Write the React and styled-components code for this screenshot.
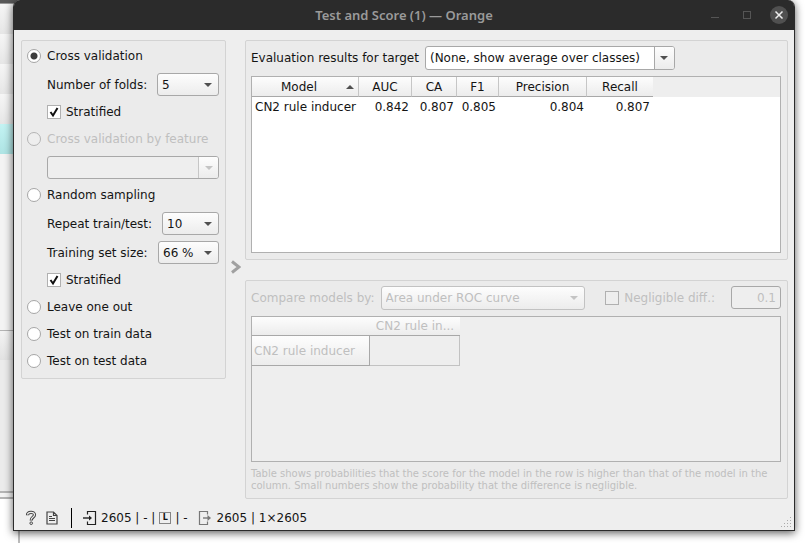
import React, { useState } from "react";
import styled, { createGlobalStyle, css } from "styled-components";

const GlobalStyle = createGlobalStyle`
  *, *::before, *::after { box-sizing: border-box; }
  html, body { margin: 0; padding: 0; }
  body {
    background: #fff;
    font: 12px/16px "DejaVu Sans", sans-serif;
    color: #141414;
    overflow: hidden;
  }
  input, select, button { font: inherit; color: inherit; margin: 0; }
`;

const raised = "linear-gradient(#fdfdfd, #ececec)";

const Desktop = styled.div`
  position: relative;
  display: flex;
  min-height: 100vh;
  padding: 0 16px 12px 13px;
`;

/* Window that lies behind the dialog */
const BackWindow = styled.div`
  position: absolute;
  inset: 0 auto 0 0;
  width: 20px;
  display: flex;
  flex-direction: column;
`;
const BackTitle = styled.div`
  height: 4px;
  background: #585858;
  border-bottom: 1px solid #999;
`;
const BackRow = styled.div`
  height: 30px;
  background: ${(p) => (p.$selected ? "linear-gradient(#c3f3f3, #aee4e4)" : "linear-gradient(#f6f6f6, #e6e6e6)")};
`;
const BackPane = styled.div`
  height: ${(p) => p.$height}px;
  background: ${(p) => p.$fill};
  border-bottom: ${(p) => p.$line || 0}px solid #b4b4b4;
`;
const BackEdge = styled.div`
  flex: 1;
  border-right: 2px solid #bcbcbc;
`;

const Dialog = styled.main`
  position: relative;
  flex: 1;
  min-width: 0;
  display: flex;
  flex-direction: column;
  background: #eee;
  border: 1px solid #2b2b2b;
  border-top: 0;
  border-radius: 7px 7px 0 0;
  box-shadow: 0 2px 9px rgba(0, 0, 0, 0.65);
`;

const TitleBar = styled.header`
  height: 30px;
  display: grid;
  grid-template-columns: 1fr auto 1fr;
  align-items: center;
  background: #2b2b2b;
  border-radius: 6px 6px 0 0;
`;
const Title = styled.h1`
  grid-column: 2;
  margin: 0;
  font: 600 13px/18px "Noto Sans", sans-serif;
  color: #9a9a9a;
`;
const WindowButtons = styled.div`
  justify-self: end;
  display: flex;
  gap: 14px;
  padding-right: 6px;
`;
const WindowButton = styled.button`
  width: 18px;
  height: 18px;
  padding: 0;
  border: 0;
  border-radius: 50%;
  background: ${(p) => (p.$filled ? "#505050" : "transparent")};
  svg { display: block; }
`;

const Body = styled.div`
  flex: 1;
  display: grid;
  grid-template-columns: auto 19px 1fr;
  padding: 10px 6px 0 7px;
`;

const Panel = styled.section`
  display: flex;
  flex-direction: column;
  gap: 6px;
  min-width: 0;
  padding: 5px 6px 6px 5px;
  border: 1px solid #d3d3d3;
  border-radius: 2px;
  background: #ebebeb;
  color: ${(p) => (p.$disabled ? "#bfbfbf" : "inherit")};
`;
const OptionsPanel = styled(Panel)`
  align-self: start;
  width: 205px;
`;
const Results = styled.div`
  display: grid;
  grid-template-rows: 1fr 1fr;
  gap: 20px;
  min-width: 0;
`;

const ChoiceRow = styled.label`
  display: flex;
  align-items: center;
  gap: ${(p) => (p.$check ? 5 : 6)}px;
  height: 21px;
  padding-bottom: 1px;
  margin-left: ${(p) => (p.$indent ? 20 : 0)}px;
  color: ${(p) => (p.$disabled ? "#bfbfbf" : "inherit")};
`;
const FieldRow = styled.div`
  display: flex;
  align-items: center;
  justify-content: space-between;
  height: 23px;
  margin-left: 20px;
`;
const Toolbar = styled.div`
  display: flex;
  align-items: center;
  height: 24px;
  gap: 6px;
`;

const Radio = styled.input.attrs({ type: "radio" })`
  appearance: none;
  width: 14px;
  height: 14px;
  border: 1px solid #a6a6a6;
  border-radius: 50%;
  background: #fff;
  &:checked { background: radial-gradient(circle, #3c3c3c 3px, #fff 4px); }
  &:disabled { background: #eee; border-color: #b4b4b4; }
`;

const CheckWrap = styled.span`
  display: grid;
  width: 14px;
  height: 14px;
  > * { grid-area: 1 / 1; }
  svg { pointer-events: none; visibility: hidden; }
  input:checked + svg { visibility: visible; }
`;
const CheckInput = styled.input.attrs({ type: "checkbox" })`
  appearance: none;
  width: 14px;
  height: 14px;
  border: 1px solid #b0b0b0;
  background: #fff;
  &:disabled { background: #eee; }
`;

const SelectWrap = styled.span`
  display: grid;
  width: ${(p) => p.$width}px;
  height: ${(p) => p.$height || 23}px;
  > * { grid-area: 1 / 1; }
`;
const SelectBox = styled.select`
  appearance: none;
  width: 100%;
  height: 100%;
  padding: 0 22px 0 4px;
  border: 1px solid ${(p) => (p.$faint ? "#c2c2c2" : "#a8a8a8")};
  border-radius: 3px;
  background: ${raised};
  opacity: 1;
  ${(p) => p.$editable && css`background: ${p.disabled ? "#eee" : "#fff"};`}
  &:disabled { color: #bfbfbf; }
`;
const SelectArrow = styled.span`
  justify-self: end;
  display: grid;
  place-items: center;
  width: 20px;
  margin: 1px;
  border-radius: 0 2px 2px 0;
  pointer-events: none;
  color: ${(p) => (p.$disabled ? "#c4c4c4" : "#505050")};
  ${(p) => p.$editable && css`
    border-left: 1px solid ${p.$disabled ? "#c6c6c6" : "#a8a8a8"};
    background: ${raised};
  `}
`;

const Expander = styled.button`
  place-self: center;
  width: 19px;
  height: 20px;
  margin-bottom: 5px;
  padding: 0;
  border: 0;
  background: none;
  svg { display: block; margin: auto; }
`;

const TableFrame = styled.div`
  flex: 1;
  min-height: 0;
  border: 1px solid #b0b0b0;
  background: ${(p) => (p.$disabled ? "#eee" : "linear-gradient(#eee 20px, #fff 20px)")};
  overflow: hidden;
`;
const Table = styled.table`
  table-layout: fixed;
  width: ${(p) => p.$width}px;
  border-collapse: separate;
  border-spacing: 0;
`;
const HeadCell = styled.th`
  height: ${(p) => (p.$compare ? 19 : 20)}px;
  padding: 0;
  font-weight: normal;
  text-align: center;
  background: ${raised};
  border-bottom: 1px solid #a8a8a8;
  border-right: ${(p) => (p.$divider ? "1px solid #c6c6c6" : "0")};
`;
const SortHead = styled.span`
  display: grid;
  grid-template-columns: 1fr 12px;
  align-items: center;
`;
const Cell = styled.td`
  height: 19px;
  padding: 0 3px;
  text-align: ${(p) => (p.$left ? "left" : "right")};
  white-space: nowrap;
`;
const RowHead = styled.th`
  height: 30px;
  padding: 2px 2px 0;
  font-weight: normal;
  text-align: left;
  white-space: nowrap;
  background: ${raised};
  border: solid #a8a8a8;
  border-width: 0 1px 1px 0;
`;
const EmptyCell = styled.td`
  border: solid #c2c2c2;
  border-width: 0 1px 1px 0;
`;

const DiffLabel = styled.label`
  display: flex;
  align-items: center;
  gap: 5px;
  margin: 0 10px 0 auto;
`;
const DiffInput = styled.input`
  width: 50px;
  height: 23px;
  padding: 0 4px;
  border: 1px solid #a8a8a8;
  border-radius: 3px;
  background: #eee;
  text-align: right;
`;
const Hint = styled.p`
  margin: 0;
  font-size: 10px;
  line-height: 12px;
`;

const StatusBar = styled.footer`
  display: flex;
  align-items: center;
  height: 31px;
  padding: 6px 0 0 6px;
`;
const StatusButton = styled.button`
  width: 21px;
  height: 18px;
  padding: 0;
  border: 0;
  background: none;
  svg { display: block; margin: auto; }
`;
const Divider = styled.span`
  width: 1px;
  height: 20px;
  margin: 0 10px 0 9px;
  background: #000;
`;
const StatusItem = styled.span`
  display: flex;
  align-items: center;
  gap: ${(p) => p.$gap || 4}px;
  margin-right: 10px;
  white-space: pre;
`;
const BatchMark = styled.span`
  display: grid;
  place-items: center;
  width: 12px;
  height: 12px;
  border: 1px solid #858585;
  font-size: 8px;
  line-height: 10px;
  font-weight: bold;
`;
const Grip = styled.svg`
  align-self: flex-end;
  margin: 0 2px 2px auto;
`;

function Select({ id, options, width, height, editable, disabled, faint, label }) {
  return (
    <SelectWrap $width={width} $height={height}>
      <SelectBox id={id} aria-label={label} $editable={editable} $faint={faint} disabled={disabled}>
        {options.map((o) => <option key={o}>{o}</option>)}
      </SelectBox>
      <SelectArrow $editable={editable} $disabled={disabled}>
        <svg width="8" height="4" viewBox="0 0 8 4"><path d="M0 0H8L4 4Z" fill="currentColor" /></svg>
      </SelectArrow>
    </SelectWrap>
  );
}

function Check(props) {
  return (
    <CheckWrap>
      <CheckInput {...props} />
      <svg width="14" height="14" viewBox="0 0 14 14">
        <path d="M3.5 7L6 10.5L10.5 3" fill="none" stroke="#111" strokeWidth="2" />
      </svg>
    </CheckWrap>
  );
}

const scores = [
  { name: "Model", width: 107, value: "CN2 rule inducer" },
  { name: "AUC", width: 53, value: "0.842" },
  { name: "CA", width: 45, value: "0.807" },
  { name: "F1", width: 42, value: "0.805" },
  { name: "Precision", width: 88, value: "0.804" },
  { name: "Recall", width: 66, value: "0.807" },
];

export default function App() {
  const [method, setMethod] = useState("cv");
  const radio = (value, text, disabled) => (
    <ChoiceRow $disabled={disabled}>
      <Radio name="method" checked={method === value} disabled={disabled} onChange={() => setMethod(value)} />
      {text}
    </ChoiceRow>
  );

  return (
    <>
      <GlobalStyle />
      <Desktop>
        <BackWindow aria-hidden="true">
          <BackTitle />
          <BackRow /><BackRow /><BackRow /><BackRow />
          <BackRow $selected />
          <BackPane $height={177} $fill="#f3f3f3" $line={1} />
          <BackPane $height={29} $fill="linear-gradient(#f3f3f3, #e2e2e2)" />
          <BackPane $height={133} $fill="#ebebeb" $line={2} />
          <BackPane $height={6} $fill="#f3f3f3" $line={2} />
          <BackEdge />
        </BackWindow>

        <Dialog>
          <TitleBar>
            <Title>Test and Score (1) — Orange</Title>
            <WindowButtons>
              <WindowButton aria-label="Minimize">
                <svg width="18" height="18"><path d="M5 11.5H13" stroke="#555" /></svg>
              </WindowButton>
              <WindowButton aria-label="Maximize">
                <svg width="18" height="18"><rect x="5.5" y="5.5" width="7" height="7" fill="none" stroke="#555" /></svg>
              </WindowButton>
              <WindowButton aria-label="Close" $filled>
                <svg width="18" height="18"><path d="M5.5 5.5L12.5 12.5M12.5 5.5L5.5 12.5" stroke="#eee" strokeWidth="1.5" /></svg>
              </WindowButton>
            </WindowButtons>
          </TitleBar>

          <Body>
            <OptionsPanel aria-label="Sampling">
              {radio("cv", "Cross validation")}
              <FieldRow>
                <label htmlFor="folds">Number of folds:</label>
                <Select id="folds" options={["5"]} width={62} />
              </FieldRow>
              <ChoiceRow $indent $check><Check defaultChecked />Stratified</ChoiceRow>
              {radio("feature", "Cross validation by feature", true)}
              <FieldRow>
                <Select label="Feature" options={[""]} width={172} editable disabled />
              </FieldRow>
              {radio("random", "Random sampling")}
              <FieldRow>
                <label htmlFor="repeat">Repeat train/test:</label>
                <Select id="repeat" options={["10"]} width={57} />
              </FieldRow>
              <FieldRow>
                <label htmlFor="size">Training set size:</label>
                <Select id="size" options={["66 %"]} width={61} />
              </FieldRow>
              <ChoiceRow $indent $check><Check defaultChecked />Stratified</ChoiceRow>
              {radio("loo", "Leave one out")}
              {radio("train", "Test on train data")}
              {radio("test", "Test on test data")}
            </OptionsPanel>

            <Expander aria-label="Collapse options">
              <svg width="10" height="14" viewBox="0 0 10 14">
                <path d="M1 1.5L8 7L1 12.5" fill="none" stroke="#a0a0a0" strokeWidth="3" />
              </svg>
            </Expander>

            <Results>
              <Panel>
                <Toolbar>
                  <label htmlFor="target">Evaluation results for target</label>
                  <Select id="target" options={["(None, show average over classes)"]} width={250} height={24} editable />
                </Toolbar>
                <TableFrame>
                  <Table $width={401}>
                    <colgroup>{scores.map((s) => <col key={s.name} width={s.width} />)}</colgroup>
                    <thead>
                      <tr>
                        {scores.map((s, i) => (
                          <HeadCell key={s.name} $divider={i < scores.length - 1}>
                            {i === 0 ? (
                              <SortHead>
                                {s.name}
                                <svg width="8" height="4" viewBox="0 0 8 4"><path d="M0 4H8L4 0Z" fill="#505050" /></svg>
                              </SortHead>
                            ) : s.name}
                          </HeadCell>
                        ))}
                      </tr>
                    </thead>
                    <tbody>
                      <tr>{scores.map((s, i) => <Cell key={s.name} $left={i === 0}>{s.value}</Cell>)}</tr>
                    </tbody>
                  </Table>
                </TableFrame>
              </Panel>

              <Panel $disabled>
                <Toolbar>
                  <label htmlFor="compare">Compare models by:</label>
                  <Select id="compare" options={["Area under ROC curve"]} width={204} height={24} disabled faint />
                  <DiffLabel><Check disabled />Negligible diff.:</DiffLabel>
                  <DiffInput aria-label="Negligible difference" defaultValue="0.1" disabled />
                </Toolbar>
                <TableFrame $disabled>
                  <Table $width={208}>
                    <colgroup><col width={118} /><col width={90} /></colgroup>
                    <thead>
                      <tr><HeadCell as="td" $compare /><HeadCell $compare>CN2 rule in...</HeadCell></tr>
                    </thead>
                    <tbody>
                      <tr><RowHead>CN2 rule inducer</RowHead><EmptyCell /></tr>
                    </tbody>
                  </Table>
                </TableFrame>
                <Hint>
                  Table shows probabilities that the score for the model in the row is higher than that of the model in the
                  column. Small numbers show the probability that the difference is negligible.
                </Hint>
              </Panel>
            </Results>
          </Body>

          <StatusBar>
            <StatusButton aria-label="Help">
              <svg width="12" height="16" viewBox="0 0 12 16" fill="none">
                <path d="M2.5 5.2C2.5 1.4 9.5 1.4 9.5 4.8C9.5 7.5 6.2 7.2 6.2 10.5" stroke="#444" strokeWidth="3.2" />
                <path d="M2.5 4.6C2.8 1.6 9.5 1.6 9.5 4.8C9.5 7.5 6.2 7.2 6.2 9.8" stroke="#eee" strokeWidth="1.2" />
                <circle cx="6.2" cy="13.2" r="1.3" fill="#eee" stroke="#444" />
              </svg>
            </StatusButton>
            <StatusButton aria-label="Report">
              <svg width="12" height="14" viewBox="0 0 12 14" fill="none" stroke="#444">
                <path d="M1 1H7.5L11 4.5V13H1ZM7.5 1V4.5H11" strokeWidth="1.2" />
                <path d="M3 5.5H6M3 7.5H9M3 9.5H9" />
              </svg>
            </StatusButton>
            <Divider />
            <StatusItem>
              <svg width="15" height="14" viewBox="0 0 15 14" fill="none" stroke="#222">
                <path d="M5.5 3.5V.5H13.5V13.5H5.5V10.5" strokeWidth="1.2" />
                <path d="M1 7H8" strokeWidth="1.4" />
                <path d="M7 4.5L10 7L7 9.5Z" fill="#222" stroke="none" />
              </svg>
              <span>2605 | - |</span>
              <BatchMark>L</BatchMark>
              <span>| -</span>
            </StatusItem>
            <StatusItem $gap={5}>
              <svg width="14" height="14" viewBox="0 0 14 14" fill="none" stroke="#777">
                <path d="M9.5 3.5V.5H1.5V13.5H9.5V10.5" strokeWidth="1.2" />
                <path d="M5 7H11" strokeWidth="1.4" />
                <path d="M9.5 4L13 7L9.5 10Z" fill="#777" stroke="none" />
              </svg>
              <span>2605 | 1×2605</span>
            </StatusItem>
            <Grip width="12" height="12" viewBox="0 0 12 12" fill="#aaa">
              {[[10, 1], [7, 4], [10, 4], [4, 7], [7, 7], [10, 7], [1, 10], [4, 10], [7, 10], [10, 10]].map(([x, y]) => (
                <rect key={`${x}-${y}`} x={x} y={y} width="1" height="1" />
              ))}
            </Grip>
          </StatusBar>
        </Dialog>
      </Desktop>
    </>
  );
}
